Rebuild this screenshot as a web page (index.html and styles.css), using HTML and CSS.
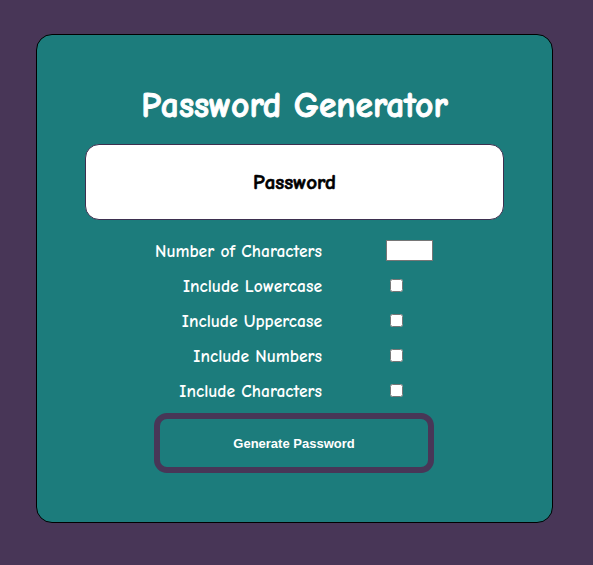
FILE: index.html
```html
<!DOCTYPE html>
<html>
<head>
<meta charset="utf-8">
<link rel="stylesheet" href="styles.css">
</head>
<body>
<div class="card">
  <h1 class="title">Password Generator</h1>
  <div class="output">Password</div>
  <div class="options">
    <label class="opt-label" for="len">Number of Characters</label>
    <div class="opt-input"><input id="len" class="num" type="text"></div>
    <label class="opt-label" for="lc">Include Lowercase</label>
    <div class="opt-input"><input id="lc" class="chk" type="checkbox"></div>
    <label class="opt-label" for="uc">Include Uppercase</label>
    <div class="opt-input"><input id="uc" class="chk" type="checkbox"></div>
    <label class="opt-label" for="nu">Include Numbers</label>
    <div class="opt-input"><input id="nu" class="chk" type="checkbox"></div>
    <label class="opt-label" for="ch">Include Characters</label>
    <div class="opt-input"><input id="ch" class="chk" type="checkbox"></div>
  </div>
  <div class="actions">
    <button class="generate">Generate Password</button>
  </div>
</div>
</body>
</html>
```

FILE: styles.css
```css
html, body {
  margin: 0;
  padding: 0;
}
body {
  background: #483657;
  font-family: "Comic Sans MS", "Comic Neue", "Open Sans", sans-serif;
  padding: 34px 0 0 36px;
  height: 565px;
  box-sizing: border-box;
}
.card {
  width: 517px;
  height: 489px;
  box-sizing: border-box;
  background: #1c7c7c;
  border: 1px solid #000;
  border-radius: 16px;
  display: flex;
  flex-direction: column;
  align-items: stretch;
}
.title {
  margin: 51px 0 0 0;
  text-align: center;
  color: #fff;
  font-size: 35.5px;
  font-weight: 700;
  line-height: 40px;
  -webkit-text-stroke: 0.9px #fff;
}
.output {
  margin: 18px 48px 0 48px;
  height: 76px;
  box-sizing: border-box;
  background: #fff;
  border: 1px solid #3d2f4f;
  border-radius: 14px;
  display: flex;
  align-items: center;
  justify-content: center;
  font-weight: 700;
  font-size: 21px;
  color: #000;
  -webkit-text-stroke: 0.6px #000;
}
.options {
  margin-top: 13px;
  display: grid;
  grid-template-columns: 285px auto;
  column-gap: 64px;
  grid-auto-rows: 35px;
  align-items: center;
  color: #fff;
  font-size: 17.5px;
  font-weight: 700;
}
.opt-label {
  text-align: right;
}
.opt-input {
  display: flex;
  align-items: center;
}
.num {
  width: 47px;
  height: 21px;
  box-sizing: border-box;
  margin: 0;
  border: 1px solid #767676;
  background: #fff;
}
.chk {
  margin: 0 0 0 4px;
  width: 13px;
  height: 13px;
}
.actions {
  margin-top: 5px;
  padding-left: 117px;
}
.generate {
  width: 280px;
  height: 60px;
  box-sizing: border-box;
  background: #1c7c7c;
  border: 6px solid #483657;
  border-radius: 13px;
  color: #fff;
  font-family: "Liberation Sans", Arial, sans-serif;
  font-weight: bold;
  font-size: 13px;
}
```
